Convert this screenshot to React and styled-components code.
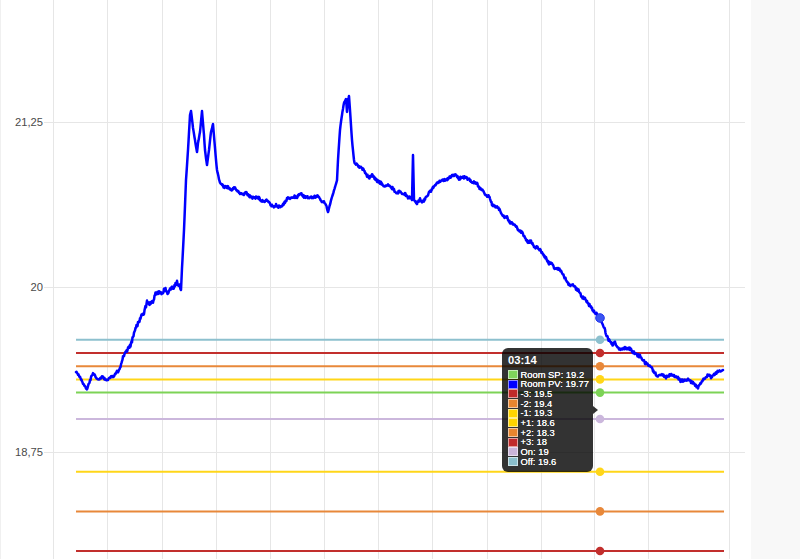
import React from "react";
import styled, { createGlobalStyle } from "styled-components";

const GlobalStyle = createGlobalStyle`
  html, body { margin: 0; padding: 0; background: #fff; }
  body { font-family: "Liberation Sans", Arial, sans-serif; }
  #root { width: 800px; height: 559px; }
`;

const Page = styled.div`
  display: flex;
  width: 800px;
  height: 559px;
  overflow: hidden;
  background: #fff;
`;

const ChartPane = styled.div`
  position: relative;
  flex: 0 0 751px;
  height: 100%;
  background: #fff;
`;

const SidePanel = styled.div`
  flex: 1 1 auto;
  height: 100%;
  background: #f8f8f8;
`;

const ChartSvg = styled.svg`
  display: block;
`;

const AxisLabel = styled.text`
  font-family: "Liberation Sans", Arial, sans-serif;
  font-size: 11.2px;
  fill: #4a4a4a;
`;

const Tooltip = styled.div`
  position: absolute;
  left: 502px;
  top: 348px;
  width: 91px;
  box-sizing: border-box;
  padding: 6px 3px 6px 6px;
  background: rgba(0, 0, 0, 0.8);
  border-radius: 6px;
  color: #fff;
  &::after {
    content: "";
    position: absolute;
    right: -5px;
    top: 58px;
    border-style: solid;
    border-width: 4.5px 0 4.5px 5px;
    border-color: transparent transparent transparent rgba(0, 0, 0, 0.8);
  }
`;

const TooltipTitle = styled.div`
  font-size: 11.2px;
  font-weight: bold;
  line-height: 12px;
  margin-bottom: 3.5px;
  white-space: nowrap;
`;

const TooltipRow = styled.div`
  display: flex;
  align-items: center;
  height: 9.7px;
  font-size: 9.4px;
  line-height: 9.7px;
  white-space: nowrap;
  text-shadow: 0 0 0.5px #fff;
`;

const Swatch = styled.span`
  flex: 0 0 auto;
  width: 10px;
  height: 9px;
  box-sizing: border-box;
  margin-right: 2.5px;
  background: ${(p) => p.$color};
  border: 1px solid rgba(255, 255, 255, 0.55);
`;

const toY = (v) => 287 - (v - 20) * 132;

const SERIES = [
  { label: "Room SP", value: "19.2", v: 19.2, color: "#7dd356", swatch: "#7fd35a" },
  { label: "Room PV", value: "19.77", v: 19.77, color: "#0000ff", swatch: "#0000ff", pv: true },
  { label: "-3", value: "19.5", v: 19.5, color: "#c22f2d", swatch: "#c02a2a" },
  { label: "-2", value: "19.4", v: 19.4, color: "#e8883a", swatch: "#e8862f" },
  { label: "-1", value: "19.3", v: 19.3, color: "#ffd619", swatch: "#ffd400" },
  { label: "+1", value: "18.6", v: 18.6, color: "#ffd619", swatch: "#ffd400" },
  { label: "+2", value: "18.3", v: 18.3, color: "#e8883a", swatch: "#e8862f" },
  { label: "+3", value: "18", v: 18, color: "#c22f2d", swatch: "#c02a2a" },
  { label: "On", value: "19", v: 19, color: "#cbb7dc", swatch: "#c9b4d9" },
  { label: "Off", value: "19.6", v: 19.6, color: "#8dc0ce", swatch: "#8bbfcc" },
];

const VGRID = [53, 107, 162, 216, 270, 324, 378, 432, 487, 541, 594, 648, 729];
const HGRID = [
  { y: 122, label: "21,25" },
  { y: 287, label: "20" },
  { y: 452, label: "18,75" },
];

const KEY = [
  [76, 372], [80, 377], [84, 385], [87, 389], [90, 379], [93, 373], [97, 380], [102, 378],
  [108, 379], [113, 376], [118, 372], [122, 362], [126, 352], [130, 345], [134, 333],
  [138, 322], [142, 313], [146, 306], [150, 300], [156, 296], [162, 292], [168, 290],
  [172, 287], [176, 285], [180, 284], [181, 290], [182, 268], [184, 230], [186, 180],
  [188, 150], [190, 115], [191, 111], [193, 128], [195, 140], [197, 152], [198, 143],
  [200, 132], [202, 111], [204, 135], [205, 150], [207, 165], [209, 150], [211, 132],
  [213, 124], [215, 148], [217, 170], [220, 182], [224, 186], [232, 189], [242, 193],
  [252, 197], [262, 200], [272, 204], [278, 207], [284, 202], [292, 198], [302, 195],
  [312, 196], [320, 198], [326, 204], [328, 212], [331, 200], [334, 190], [337, 180],
  [338, 160], [340, 130], [342, 115], [344, 103], [346, 99], [347, 112], [348, 100],
  [349, 96], [350, 110], [352, 140], [354, 160], [358, 167], [366, 173], [376, 180],
  [386, 186], [396, 192], [404, 196], [411, 199], [412, 200], [413, 155], [414, 200],
  [416, 203], [422, 201], [428, 196], [434, 187], [442, 181], [452, 178], [462, 177],
  [470, 179], [478, 187], [488, 197], [498, 209], [508, 220], [518, 230], [528, 240],
  [538, 250], [548, 261], [558, 270], [568, 281], [578, 291], [588, 302], [596, 312],
  [600, 318], [604, 328], [608, 338], [612, 344], [618, 347], [626, 349], [634, 352],
  [640, 355], [646, 362], [652, 369], [658, 375], [666, 377], [676, 378], [686, 381],
  [694, 384], [698, 386], [702, 380], [708, 377], [714, 375], [720, 372], [723, 370],
];

function mulberry32(a) {
  return function () {
    a |= 0;
    a = (a + 0x6d2b79f5) | 0;
    let t = Math.imul(a ^ (a >>> 15), 1 | a);
    t = (t + Math.imul(t ^ (t >>> 7), 61 | t)) ^ t;
    return ((t ^ (t >>> 14)) >>> 0) / 4294967296;
  };
}

function ampAt(x) {
  if (x > 120 && x < 181) return 3.4;
  if (x > 218 && x < 327) return 2.3;
  if (x > 354 && x < 411) return 2.4;
  if (x > 415 && x < 598) return 2.3;
  if (x > 604 && x < 720) return 2.6;
  if (x >= 76 && x < 120) return 1.8;
  return 0.6;
}

const LF_STEP = 3;
const lfRnd = mulberry32(4242);
const LF = Array.from({ length: 260 }, () => lfRnd() - 0.5);
function lowFreq(x) {
  const p = x / LF_STEP;
  const i = Math.floor(p);
  const f = p - i;
  return LF[i] * (1 - f) + LF[i + 1] * f;
}

function buildPath() {
  const rnd = mulberry32(98765);
  let d = `M${KEY[0][0]} ${KEY[0][1]}`;
  for (let i = 0; i < KEY.length - 1; i++) {
    const [x0, y0] = KEY[i];
    const [x1, y1] = KEY[i + 1];
    const dx = x1 - x0;
    const n = Math.max(1, Math.round(dx * 2));
    for (let j = 1; j <= n; j++) {
      const t = j / n;
      const x = x0 + dx * t;
      let y = y0 + (y1 - y0) * t;
      if (j < n || dx > 2) {
        const a = ampAt(x);
        y += lowFreq(x) * 2 * a * 1.1 + (rnd() - 0.5) * 2 * a * 0.55;
      }
      d += ` L${x.toFixed(2)} ${y.toFixed(1)}`;
    }
  }
  return d;
}

const PV_PATH = buildPath();

export default function App() {
  return (
    <>
      <GlobalStyle />
      <Page>
        <ChartPane>
          <ChartSvg width="751" height="559" viewBox="0 0 751 559">
            <line x1="0.5" y1="0" x2="0.5" y2="559" stroke="#f0f0f0" strokeWidth="1" />
            {VGRID.map((x) => (
              <line key={x} x1={x + 0.5} y1="0" x2={x + 0.5} y2="559" stroke="#e6e6e6" strokeWidth="1" />
            ))}
            {HGRID.map((g) => (
              <g key={g.y}>
                <line x1="44" y1={g.y + 0.5} x2="745" y2={g.y + 0.5} stroke="#e6e6e6" strokeWidth="1" />
                <AxisLabel x="43" y={g.y + 4} textAnchor="end">
                  {g.label}
                </AxisLabel>
              </g>
            ))}
            {SERIES.filter((s) => !s.pv).map((s) => (
              <line
                key={s.label}
                x1="76"
                y1={toY(s.v)}
                x2="724"
                y2={toY(s.v)}
                stroke={s.color}
                strokeWidth="2"
              />
            ))}
            <path
              d={PV_PATH}
              fill="none"
              stroke="#0000ff"
              strokeWidth="2.5"
              strokeLinejoin="round"
              strokeLinecap="round"
            />
            {SERIES.map((s) => (
              <circle
                key={s.label}
                cx="600"
                cy={s.pv ? 318 : toY(s.v)}
                r="4.3"
                fill={s.pv ? "#3a55f2" : s.color}
                stroke={s.pv ? "#2233ee" : "none"}
                strokeWidth="1"
              />
            ))}
          </ChartSvg>
          <Tooltip>
            <TooltipTitle>03:14</TooltipTitle>
            {SERIES.map((s) => (
              <TooltipRow key={s.label}>
                <Swatch $color={s.swatch} />
                {s.label}: {s.value}
              </TooltipRow>
            ))}
          </Tooltip>
        </ChartPane>
        <SidePanel />
      </Page>
    </>
  );
}
